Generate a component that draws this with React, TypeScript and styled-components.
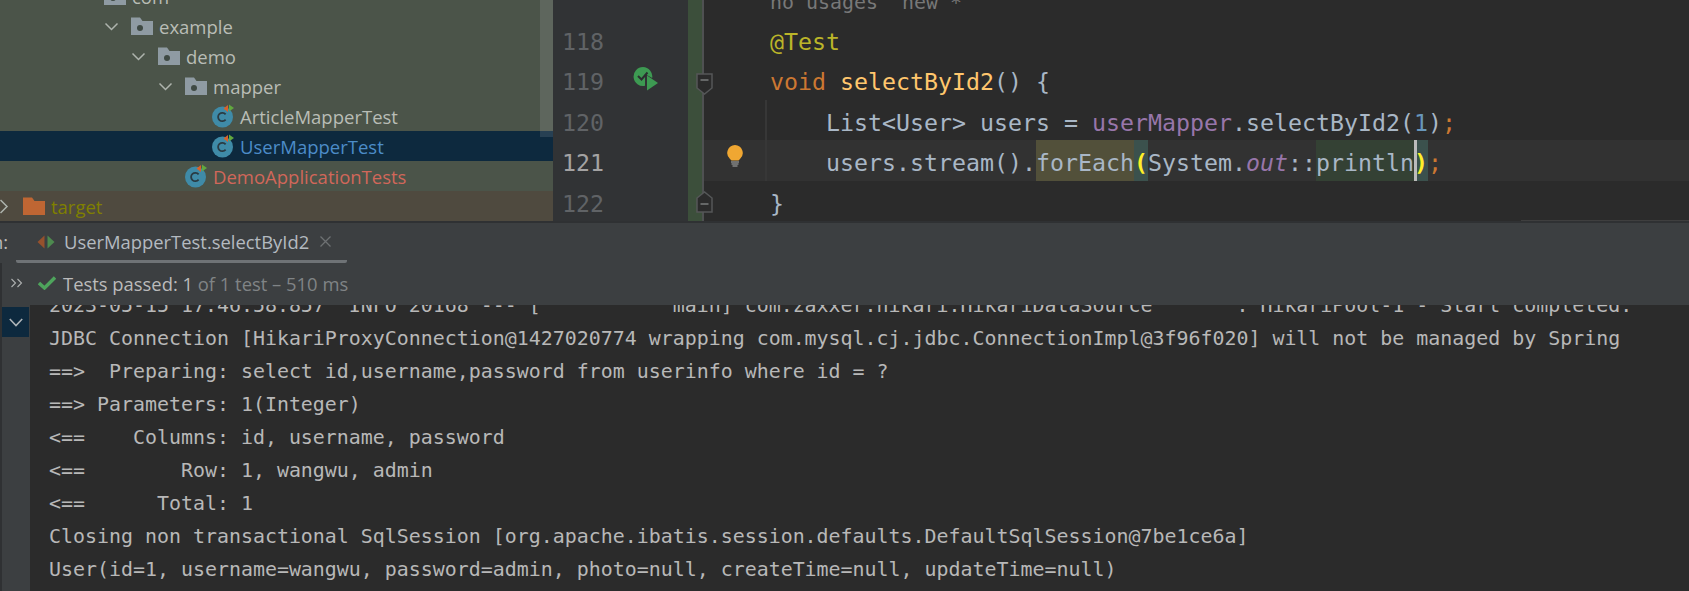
import styled, { createGlobalStyle } from "styled-components";

const GlobalStyle = createGlobalStyle`
  html, body {
    margin: 0;
    background: #2b2b2b;
  }
`;

const uiFont = `"Open Sans", "Noto Sans", sans-serif`;
const monoFont = `"DejaVu Sans Mono", "Liberation Mono", monospace`;

const Page = styled.div`
  width: 1689px;
  height: 591px;
  display: flex;
  flex-direction: column;
  overflow: hidden;
`;

const TopArea = styled.div`
  height: 221px;
  flex: none;
  display: flex;
`;

const Divider = styled.div`
  height: 2px;
  flex: none;
  background: #2f3133;
`;

/* project tree */

const Tree = styled.div`
  width: 553px;
  flex: none;
  position: relative;
  overflow: hidden;
  background: #4b5449;
  display: flex;
  flex-direction: column;
  justify-content: flex-end;
`;

const TreeThumb = styled.div`
  position: absolute;
  top: 0;
  right: 0;
  width: 13px;
  height: 137px;
  background: rgba(255, 255, 255, 0.11);
`;

const TreeRow = styled.div<{ $level: number; $selected?: boolean; $ignored?: boolean }>`
  height: 30px;
  flex: none;
  display: flex;
  align-items: center;
  padding-left: ${(p) => p.$level * 27}px;
  background: ${(p) => (p.$selected ? "#0d293e" : p.$ignored ? "#4f4a3f" : "transparent")};
`;

const Chevron = styled.svg`
  width: 13px;
  height: 13px;
  margin-left: -3px;
  margin-right: 13px;
  flex: none;
  overflow: visible;
`;

const LeafSpacer = styled.div`
  width: 23px;
  flex: none;
`;

const TreeIcon = styled.svg`
  width: 22px;
  height: 24px;
  flex: none;
  margin-right: 6px;
`;

const TreeLabel = styled.span<{ $color?: string }>`
  font-family: ${uiFont};
  font-size: 18.5px;
  line-height: 33px;
  white-space: pre;
  color: ${(p) => p.$color ?? "#b9bdb6"};
`;

function Arrow({ open }: { open: boolean }) {
  return (
    <Chevron viewBox="0 0 13 13">
      <path
        d={open ? "M0.5 3.5 L6.5 9.5 L12.5 3.5" : "M3.5 0 L10 6.5 L3.5 13"}
        fill="none"
        stroke="#aeb4ad"
        strokeWidth="1.5"
      />
    </Chevron>
  );
}

function Folder({ color = "#8f9ba3", dot = true }: { color?: string; dot?: boolean }) {
  return (
    <TreeIcon viewBox="0 0 22 24">
      <path d="M0 3.5 H9 L11.5 7 H22 V21 H0 Z" fill={color} />
      {dot && <circle cx="9" cy="14" r="3" fill="#3f4a44" />}
    </TreeIcon>
  );
}

function TestClass() {
  return (
    <TreeIcon viewBox="0 0 22 24">
      <circle cx="10.5" cy="13" r="10.5" fill="#3f8ba8" />
      <path
        d="M13.6 10.4 A4.2 4.2 0 1 0 13.6 15.6"
        fill="none"
        stroke="#2a3b44"
        strokeWidth="1.8"
      />
      <path d="M16 1 V8 L11.5 4.5 Z" fill="#d9622b" />
      <path d="M17 0.5 V7.5 L22 4 Z" fill="#62a83f" />
    </TreeIcon>
  );
}

/* editor */

const Editor = styled.div`
  flex: 1;
  position: relative;
  overflow: hidden;
  background: #2b2b2b;
  display: flex;
  flex-direction: column;
  justify-content: flex-end;
`;

const EditorLine = styled.div<{ $height?: number }>`
  height: ${(p) => p.$height ?? 40.5}px;
  flex: none;
  position: relative;
  display: flex;
`;

const LineGutter = styled.div<{ $current?: boolean }>`
  width: 135px;
  flex: none;
  box-sizing: border-box;
  padding-left: 9px;
  background: #313335;
  color: ${(p) => (p.$current ? "#a4a3a3" : "#606366")};
  font-family: ${monoFont};
  font-size: 23.25px;
  line-height: 45.5px;
`;

const ChangeStripe = styled.div`
  width: 14px;
  flex: none;
  background: #3c4f3b;
  border-right: 2px solid #4f5152;
`;

const Code = styled.div<{ $current?: boolean; $indent?: number }>`
  flex: 1;
  min-width: 0;
  padding-left: ${(p) => 67 + (p.$indent ?? 0) * 14 - 1}px;
  background: ${(p) => (p.$current ? "#323232" : "transparent")};
  color: #a9b7c6;
  font-family: ${monoFont};
  font-size: 23.25px;
  line-height: 45.5px;
  white-space: pre;
`;

const HintText = styled.div`
  flex: 1;
  padding-left: 66px;
  color: #787878;
  font-family: ${monoFont};
  font-size: 19.93px;
  line-height: 20px;
  white-space: pre;
`;

const Tok = styled.span<{ $color: string; $italic?: boolean }>`
  color: ${(p) => p.$color};
  font-style: ${(p) => (p.$italic ? "italic" : "normal")};
`;

const Mark = styled.span<{ $bg: string }>`
  display: inline-block;
  height: 40.5px;
  background: ${(p) => p.$bg};
`;

const Brace = styled(Mark)<{ $caret?: boolean }>`
  color: #ffef28;
  font-weight: 700;
  box-shadow: ${(p) => (p.$caret ? "inset 3px 0 #bbbbbb" : "none")};
`;

const IndentGuide = styled.div`
  position: absolute;
  left: 212px;
  top: 0;
  bottom: 0;
  width: 2px;
  background: #373737;
`;

const FoldMark = styled.svg<{ $top: number }>`
  position: absolute;
  left: 143px;
  top: ${(p) => p.$top}px;
  width: 17px;
  height: 22px;
`;

const RunIcon = styled.svg`
  position: absolute;
  left: 80px;
  top: 7px;
  width: 25px;
  height: 25px;
`;

const BulbIcon = styled.svg`
  position: absolute;
  left: 174px;
  top: 5px;
  width: 16px;
  height: 22px;
`;

const EditorScrollEdge = styled.div`
  position: absolute;
  right: 0;
  bottom: 0;
  width: 168px;
  height: 1px;
  background: #3f3f3f;
`;

/* run tool window */

const ToolPanel = styled.div`
  height: 82px;
  flex: none;
  background: #3c3f41;
  overflow: hidden;
  font-family: ${uiFont};
  font-size: 18.4px;
  color: #bbbbbb;
`;

const TabBar = styled.div`
  height: 40px;
  display: flex;
  align-items: flex-start;
`;

const RunLabel = styled.span`
  margin-left: -8px;
  width: 24px;
  flex: none;
  line-height: 38px;
  white-space: pre;
`;

const RunTab = styled.div`
  width: 331px;
  height: 40px;
  box-sizing: border-box;
  border-bottom: 3px solid #6f7376;
  border-bottom-left-radius: 2px;
  border-bottom-right-radius: 2px;
  padding-left: 21px;
  display: flex;
  align-items: center;
  gap: 9px;
`;

const TabText = styled.span`
  line-height: 40px;
  color: #b4bac0;
`;

const TabIcon = styled.svg`
  width: 18px;
  height: 14px;
  flex: none;
`;

const CloseIcon = styled.svg`
  width: 11px;
  height: 11px;
  margin-left: 2px;
  flex: none;
`;

const StatusRow = styled.div`
  height: 42px;
  box-sizing: border-box;
  border-left: 2px solid #2f3133;
  padding-left: 9px;
  padding-bottom: 2px;
  display: flex;
  align-items: center;
`;

const ExpandIcon = styled.svg`
  width: 12px;
  height: 10px;
  flex: none;
  margin-right: 15px;
`;

const CheckIcon = styled.svg`
  width: 18px;
  height: 14px;
  flex: none;
  margin-right: 7px;
`;

const Muted = styled.span`
  color: #808486;
`;

/* console */

const ConsoleArea = styled.div`
  flex: 1;
  min-height: 0;
  display: flex;
  background: #2b2b2b;
`;

const ConsoleGutter = styled.div`
  width: 28px;
  flex: none;
  border-left: 2px solid #2f3133;
  background: #3c3f41;
  padding-top: 2px;
`;

const ScrollButton = styled.div`
  width: 27px;
  height: 30px;
  background: #0d293e;
  display: flex;
  align-items: center;
  justify-content: center;
`;

const ConsoleOutput = styled.div`
  flex: 1;
  min-width: 0;
  overflow: hidden;
  padding-left: 19px;
  padding-bottom: 5px;
  display: flex;
  flex-direction: column;
  justify-content: flex-end;
  color: #b8b8b8;
  font-family: ${monoFont};
  font-size: 19.93px;
`;

const ConsoleLine = styled.div`
  height: 33px;
  flex: none;
  line-height: 33px;
  white-space: pre;
`;

const consoleLines = [
  "2023-05-15 17:46:58.857  INFO 20168 --- [           main] com.zaxxer.hikari.HikariDataSource       : HikariPool-1 - Start completed.",
  "JDBC Connection [HikariProxyConnection@1427020774 wrapping com.mysql.cj.jdbc.ConnectionImpl@3f96f020] will not be managed by Spring",
  "==>  Preparing: select id,username,password from userinfo where id = ?",
  "==> Parameters: 1(Integer)",
  "<==    Columns: id, username, password",
  "<==        Row: 1, wangwu, admin",
  "<==      Total: 1",
  "Closing non transactional SqlSession [org.apache.ibatis.session.defaults.DefaultSqlSession@7be1ce6a]",
  "User(id=1, username=wangwu, password=admin, photo=null, createTime=null, updateTime=null)",
];

export default function App() {
  return (
    <Page>
      <GlobalStyle />
      <TopArea>
        <Tree>
          <TreeRow $level={3}>
            <LeafSpacer />
            <Folder />
            <TreeLabel>com</TreeLabel>
          </TreeRow>
          <TreeRow $level={4}>
            <Arrow open />
            <Folder />
            <TreeLabel>example</TreeLabel>
          </TreeRow>
          <TreeRow $level={5}>
            <Arrow open />
            <Folder />
            <TreeLabel>demo</TreeLabel>
          </TreeRow>
          <TreeRow $level={6}>
            <Arrow open />
            <Folder />
            <TreeLabel>mapper</TreeLabel>
          </TreeRow>
          <TreeRow $level={7}>
            <LeafSpacer />
            <TestClass />
            <TreeLabel>ArticleMapperTest</TreeLabel>
          </TreeRow>
          <TreeRow $level={7} $selected>
            <LeafSpacer />
            <TestClass />
            <TreeLabel $color="#4c8cc8">UserMapperTest</TreeLabel>
          </TreeRow>
          <TreeRow $level={6}>
            <LeafSpacer />
            <TestClass />
            <TreeLabel $color="#d1675a">DemoApplicationTests</TreeLabel>
          </TreeRow>
          <TreeRow $level={0} $ignored>
            <Arrow open={false} />
            <Folder color="#bf6633" dot={false} />
            <TreeLabel $color="#808000">target</TreeLabel>
          </TreeRow>
          <TreeThumb />
        </Tree>

        <Editor>
          <EditorLine $height={26}>
            <LineGutter />
            <ChangeStripe />
            <HintText>no usages  new *</HintText>
          </EditorLine>
          <EditorLine>
            <LineGutter>118</LineGutter>
            <ChangeStripe />
            <Code>
              <Tok $color="#bbb529">@Test</Tok>
            </Code>
          </EditorLine>
          <EditorLine>
            <LineGutter>119</LineGutter>
            <ChangeStripe />
            <Code>
              <Tok $color="#cc7832">void</Tok> <Tok $color="#ffc66d">selectById2</Tok>() {"{"}
            </Code>
            <RunIcon viewBox="0 0 25 25">
              <path
                d="M10 1 A9.5 9.5 0 1 0 12 19.8 L12 8 L19.2 12 A9.5 9.5 0 0 0 10 1 Z"
                fill="#3d9a52"
              />
              <path d="M5 10 L8.5 13.5 L14.5 6.5" fill="none" stroke="#2b2f30" strokeWidth="2" />
              <path d="M14 9.5 V24.5 L25 17 Z" fill="#3d9a52" />
            </RunIcon>
            <FoldMark $top={14} viewBox="0 0 17 22">
              <path d="M1 1 H16 V15 L8.5 21 L1 15 Z" fill="#2b2b2b" stroke="#555758" strokeWidth="1.5" />
              <path d="M4.5 7 H12.5" stroke="#7a7c7d" strokeWidth="1.5" />
            </FoldMark>
          </EditorLine>
          <EditorLine>
            <LineGutter>120</LineGutter>
            <ChangeStripe />
            <Code $indent={4}>
              List{"<"}User{">"} users = <Tok $color="#9876aa">userMapper</Tok>.selectById2(
              <Tok $color="#6897bb">1</Tok>)<Tok $color="#cc7832">;</Tok>
            </Code>
            <IndentGuide />
          </EditorLine>
          <EditorLine>
            <LineGutter $current>121</LineGutter>
            <ChangeStripe />
            <Code $current $indent={4}>
              users.stream().<Mark $bg="#52503a">forEach</Mark>
              <Brace $bg="#3b514d">(</Brace>System.<Tok $color="#9876aa" $italic>out</Tok>::
              <Mark $bg="#344134">println</Mark>
              <Brace $bg="#3b514d" $caret>)</Brace>
              <Tok $color="#cc7832">;</Tok>
            </Code>
            <IndentGuide />
            <BulbIcon viewBox="0 0 16 22">
              <path
                d="M8 0 A8 8 0 0 1 13 14 L11.5 15.5 H4.5 L3 14 A8 8 0 0 1 8 0 Z"
                fill="#f0a732"
              />
              <path d="M4 17 H12 M4.5 19 H11.5 M5.5 21 H10.5" stroke="#aeb0b0" strokeWidth="1.2" />
            </BulbIcon>
          </EditorLine>
          <EditorLine>
            <LineGutter>122</LineGutter>
            <ChangeStripe />
            <Code>{"}"}</Code>
            <FoldMark $top={10} viewBox="0 0 17 22">
              <path d="M1 21 H16 V7 L8.5 1 L1 7 Z" fill="#2b2b2b" stroke="#555758" strokeWidth="1.5" />
              <path d="M4.5 13 H12.5" stroke="#7a7c7d" strokeWidth="1.5" />
            </FoldMark>
          </EditorLine>
          <EditorScrollEdge />
        </Editor>
      </TopArea>
      <Divider />

      <ToolPanel>
        <TabBar>
          <RunLabel>n:</RunLabel>
          <RunTab>
            <TabIcon viewBox="0 0 18 14">
              <path d="M7.5 0.5 V13.5 L0.5 7 Z" fill="#96512d" />
              <path d="M10.5 0.5 V13.5 L17.5 7 Z" fill="#4d8a4f" />
            </TabIcon>
            <TabText>UserMapperTest.selectById2</TabText>
            <CloseIcon viewBox="0 0 11 11">
              <path d="M0.5 0.5 L10.5 10.5 M10.5 0.5 L0.5 10.5" stroke="#6e7173" strokeWidth="1.3" />
            </CloseIcon>
          </RunTab>
        </TabBar>
        <StatusRow>
          <ExpandIcon viewBox="0 0 12 10">
            <path d="M0.5 1 L4.5 5 L0.5 9 M6.5 1 L10.5 5 L6.5 9" fill="none" stroke="#aeb0b0" strokeWidth="1.1" />
          </ExpandIcon>
          <CheckIcon viewBox="0 0 18 14">
            <path d="M1 7 L6.5 12 L17 1.5" fill="none" stroke="#4ea45c" strokeWidth="3.4" />
          </CheckIcon>
          <span>
            Tests passed: 1 <Muted>of 1 test – 510 ms</Muted>
          </span>
        </StatusRow>
      </ToolPanel>

      <ConsoleArea>
        <ConsoleGutter>
          <ScrollButton>
            <svg width="14" height="9" viewBox="0 0 14 9">
              <path d="M0.8 1 L7 7.5 L13.2 1" fill="none" stroke="#aeb4b8" strokeWidth="1.6" />
            </svg>
          </ScrollButton>
        </ConsoleGutter>
        <ConsoleOutput>
          {consoleLines.map((line) => (
            <ConsoleLine key={line}>{line}</ConsoleLine>
          ))}
        </ConsoleOutput>
      </ConsoleArea>
    </Page>
  );
}
